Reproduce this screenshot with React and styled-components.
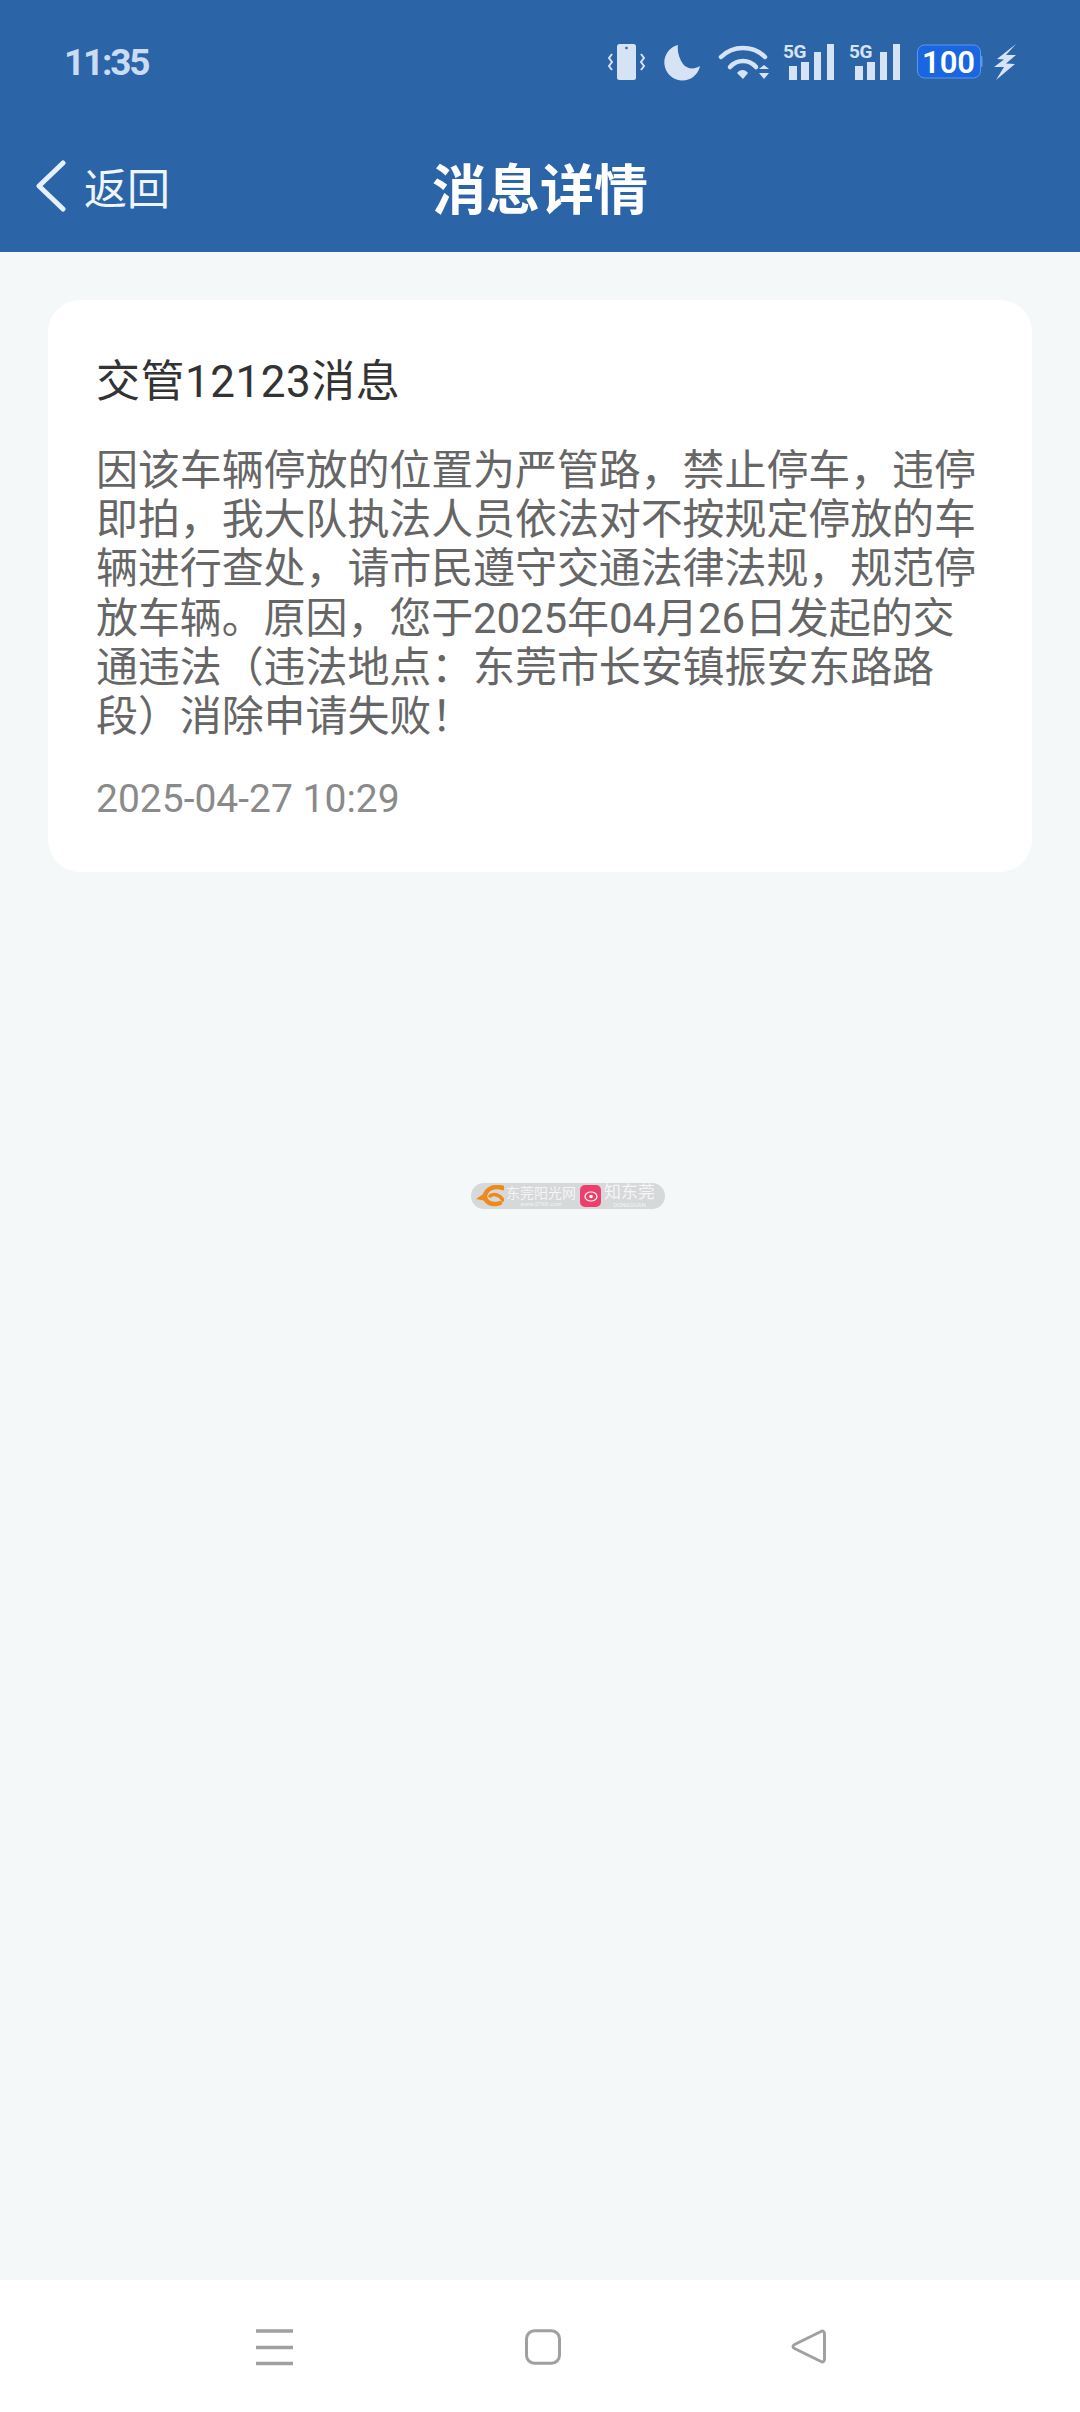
import React from "react";
import styled, { createGlobalStyle } from "styled-components";

const GlobalStyle = createGlobalStyle`
  html, body {
    margin: 0;
    padding: 0;
    background: #f4f8f9;
  }
  body {
    font-family: Roboto, "Noto Sans CJK SC", sans-serif;
    overflow: hidden;
  }
`;

const Page = styled.div`
  width: 1080px;
  height: 2412px;
  display: flex;
  flex-direction: column;
`;

const Header = styled.header`
  height: 252px;
  flex-shrink: 0;
  background: #2c64a8;
  display: flex;
  flex-direction: column;
`;

const StatusBar = styled.div`
  height: 124px;
  display: flex;
  align-items: center;
  justify-content: space-between;
  padding: 0 64px;
`;

const Clock = styled.span`
  font-size: 37px;
  font-weight: 700;
  letter-spacing: -2.2px;
  color: #c9dcf4;
`;

const StatusIcons = styled.div`
  display: flex;
  align-items: center;
`;

const StatusIcon = styled.svg`
  display: block;
  margin-left: ${(props) => props.$gap || 0}px;
`;

const Signal = styled.div`
  position: relative;
  width: 52px;
  height: 36px;
  margin-left: 14px;
`;

const NetworkLabel = styled.span`
  position: absolute;
  left: 0;
  top: -2px;
  font-size: 19px;
  line-height: 19px;
  font-weight: 700;
  letter-spacing: -0.5px;
  color: #d5e3f5;
`;

const NavBar = styled.div`
  flex: 1;
  display: flex;
  align-items: center;
  position: relative;
  padding: 0 0 0 34px;
  margin-top: -4px;
`;

const BackLink = styled.div`
  display: flex;
  align-items: center;
  gap: 17px;
  color: #eef5fc;
  font-size: 43px;
`;

const NavTitle = styled.h1`
  position: absolute;
  left: 0;
  right: 0;
  margin: 0;
  text-align: center;
  font-size: 54px;
  font-weight: 700;
  color: #fff;
`;

const Main = styled.main`
  flex: 1;
  position: relative;
  padding: 48px 48px 0;
`;

const Card = styled.section`
  background: #fff;
  border-radius: 32px;
  padding: 54px 48px 48px;
`;

const Title = styled.h2`
  margin: 0;
  font-size: 44px;
  line-height: 56px;
  font-weight: 400;
  letter-spacing: 0.5px;
  color: #333;
`;

const Body = styled.p`
  margin: 36px 0 0;
  font-size: 42px;
  line-height: 49.2px;
  letter-spacing: -0.1px;
  color: #666;
`;

const Time = styled.div`
  margin-top: 33px;
  font-size: 39px;
  line-height: 50px;
  color: #8a8a8a;
`;

const Watermark = styled.div`
  position: absolute;
  left: 471px;
  top: 931px;
  width: 194px;
  height: 26px;
  border-radius: 13px;
  background: #d6d8d9;
  display: flex;
  align-items: center;
  padding: 0 0 0 5px;
  box-sizing: border-box;
`;

const MarkText = styled.div`
  display: flex;
  flex-direction: column;
  align-items: center;
  margin-left: 2px;
  color: #f4f5f5;
  white-space: nowrap;
`;

const MarkName = styled.span`
  font-size: ${(props) => props.$size}px;
  line-height: ${(props) => props.$size}px;
`;

const MarkSub = styled.span`
  font-size: 6px;
  line-height: 7px;
`;

const MarkBadge = styled.span`
  width: 21px;
  height: 22px;
  border-radius: 5px;
  background: #ec3f6c;
  margin: 0 1px 0 4px;
  display: flex;
  align-items: center;
  justify-content: center;
  flex-shrink: 0;
`;

const BottomNav = styled.nav`
  height: 132px;
  flex-shrink: 0;
  background: #fff;
  display: flex;
  justify-content: space-between;
  align-items: flex-start;
  padding: 48px 252px 0 256px;
  box-sizing: border-box;
`;

const SignalIcon = () => (
  <Signal>
    <NetworkLabel>5G</NetworkLabel>
    <svg width="52" height="36" viewBox="0 0 52 36">
      <rect x="6" y="22" width="8" height="14" fill="#d5e3f5" />
      <rect x="18" y="18" width="8" height="18" fill="#d5e3f5" />
      <rect x="31" y="8" width="7" height="28" fill="#d5e3f5" />
      <rect x="44" y="0" width="7" height="36" fill="#d5e3f5" />
    </svg>
  </Signal>
);

const App = () => {
  return (
    <Page>
      <GlobalStyle />
      <Header>
        <StatusBar>
          <Clock>11:35</Clock>
          <StatusIcons>
            <StatusIcon width="38" height="36" viewBox="0 0 38 36" fill="none">
              <rect x="9" y="0" width="19" height="36" rx="2.5" fill="#d5e3f5" />
              <circle cx="18.5" cy="4" r="1.3" fill="#2c64a8" />
              <path d="M4 10L1 14 4 18 1 22 4 26M33 10L36 14 33 18 36 22 33 26" stroke="#d5e3f5" strokeWidth="2" />
            </StatusIcon>
            <StatusIcon $gap={17} width="37" height="37" viewBox="0 0 37 37">
              <path d="M15 1A18 18 0 1 0 37 22C31 26 24 25 20 20 16 14 14 7 15 1Z" fill="#d5e3f5" />
            </StatusIcon>
            <StatusIcon $gap={18} width="51" height="36" viewBox="0 0 51 36" fill="none">
              <path d="M3 13C15 1 35 1 47 13" stroke="#d5e3f5" strokeWidth="4.500" strokeLinecap="round" />
              <path d="M12 23C19 15 31 15 38 23" stroke="#d5e3f5" strokeWidth="4.500" strokeLinecap="round" />
              <path d="M19 29C22 25 27 25 30 29L25 35Z" fill="#d5e3f5" />
              <path d="M41 25L46 21 51 25ZM41 29H51L46 35Z" fill="#d5e3f5" />
            </StatusIcon>
            <SignalIcon />
            <SignalIcon />
            <StatusIcon $gap={16} width="66" height="36" viewBox="0 0 66 36">
              <rect x="0.500" y="1" width="63" height="33" rx="7" fill="#1a66e0" stroke="#5c98ea" strokeWidth="1" />
              <rect x="63.500" y="12" width="2" height="11" rx="1" fill="#5c98ea" />
              <text x="31.500" y="29" textAnchor="middle" fontSize="31" fontWeight="600" fontFamily="Roboto, sans-serif" fill="#fff">100</text>
            </StatusIcon>
            <StatusIcon $gap={11} width="22" height="36" viewBox="0 0 22 36">
              <path d="M22 0L3 15 10 15.500 0 23 10 23 2 36 21 20 12 19.500 22 11 12 11Z" fill="#d5e3f5" />
            </StatusIcon>
          </StatusIcons>
        </StatusBar>
        <NavBar>
          <BackLink>
            <svg width="33" height="52" viewBox="0 0 33 52" fill="none">
              <path d="M29 3L5 26 29 49" stroke="#e6f0fa" strokeWidth="5" strokeLinecap="round" strokeLinejoin="round" />
            </svg>
            <span>返回</span>
          </BackLink>
          <NavTitle>消息详情</NavTitle>
        </NavBar>
      </Header>
      <Main>
        <Card>
          <Title>交管12123消息</Title>
          <Body>
            因该车辆停放的位置为严管路，禁止停车，违停即拍，我大队执法人员依法对不按规定停放的车辆进行查处，请市民遵守交通法律法规，规范停放车辆。原因，您于2025年04月26日发起的交通违法（违法地点：东莞市长安镇振安东路路段）消除申请失败！
          </Body>
          <Time>2025-04-27 10:29</Time>
        </Card>
        <Watermark>
          <svg width="28" height="22" viewBox="0 0 28 22" fill="none" style={{ flexShrink: 0 }}>
            <path d="M27 3C18 0 10 4 9 11 8.500 17 16 21 24 18" stroke="#ee8a1c" strokeWidth="4.500" strokeLinecap="round" />
            <path d="M14 11C18 8 24 10 27 15" stroke="#ee8a1c" strokeWidth="3.500" strokeLinecap="round" />
            <path d="M0 14L10 7 10 16Z" fill="#ee8a1c" />
          </svg>
          <MarkText>
            <MarkName $size={14}>东莞阳光网</MarkName>
            <MarkSub>www.0769.com</MarkSub>
          </MarkText>
          <MarkBadge>
            <svg width="14" height="11" viewBox="0 0 14 11" fill="none">
              <ellipse cx="7" cy="5.500" rx="6" ry="4.500" stroke="#fff" strokeWidth="1.200" />
              <circle cx="7" cy="5.500" r="1.800" fill="#fff" />
            </svg>
          </MarkBadge>
          <MarkText>
            <MarkName $size={17}>知东莞</MarkName>
            <MarkSub>DONGGUAN</MarkSub>
          </MarkText>
        </Watermark>
      </Main>
      <BottomNav>
        <svg width="40" height="38" viewBox="0 0 40 38" fill="none">
          <path d="M0 3H37M0 19.500H37M0 35.500H37" stroke="#a0a0a0" strokeWidth="3.500" />
        </svg>
        <svg width="40" height="38" viewBox="0 0 40 38" fill="none">
          <rect x="4.500" y="2.750" width="33" height="32.500" rx="8" stroke="#a0a0a0" strokeWidth="3" />
        </svg>
        <svg width="40" height="38" viewBox="0 0 40 38" fill="none">
          <path d="M33 3.500C35 2.500 36.500 3.500 36.500 6V31C36.500 33.500 35 34.500 33 33.500L6.500 20.500C4.500 19.500 4.500 17.500 6.500 16.500Z" stroke="#a0a0a0" strokeWidth="3" strokeLinejoin="round" />
        </svg>
      </BottomNav>
    </Page>
  );
};

export default App;
